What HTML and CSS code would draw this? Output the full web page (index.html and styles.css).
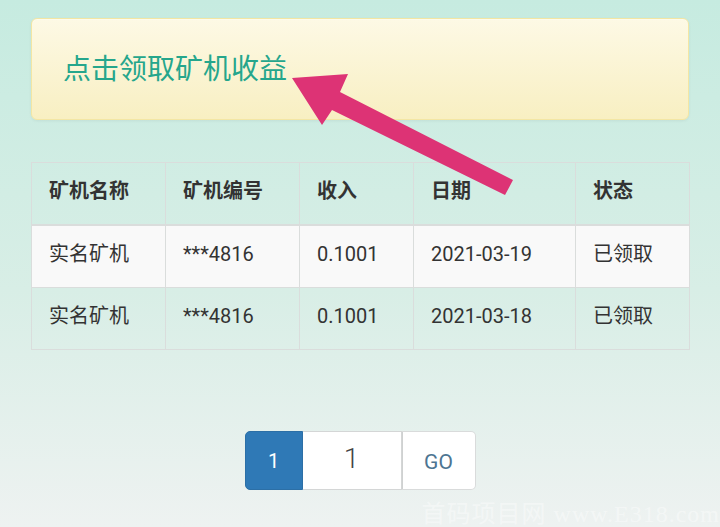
FILE: index.html
```html
<!DOCTYPE html>
<html lang="zh-CN">
<head>
    <meta charset="UTF-8">
    <meta name="viewport" content="width=device-width, initial-scale=1.0">
    <title>矿机收益</title>
    <link rel="stylesheet" href="styles.css">
</head>
<body>
<div class="page">
    <div class="alert">
        <a href="#" class="alert-link">点击领取矿机收益</a>
    </div>

    <table class="record">
        <colgroup>
            <col class="c-name">
            <col class="c-no">
            <col class="c-income">
            <col class="c-date">
            <col class="c-state">
        </colgroup>
        <thead>
        <tr>
            <th>矿机名称</th>
            <th>矿机编号</th>
            <th>收入</th>
            <th>日期</th>
            <th>状态</th>
        </tr>
        </thead>
        <tbody>
        <tr>
            <td>实名矿机</td>
            <td>***4816</td>
            <td>0.1001</td>
            <td>2021-03-19</td>
            <td>已领取</td>
        </tr>
        <tr>
            <td>实名矿机</td>
            <td>***4816</td>
            <td>0.1001</td>
            <td>2021-03-18</td>
            <td>已领取</td>
        </tr>
        </tbody>
    </table>

    <div class="pager">
        <span class="pager-cur">1</span>
        <input type="text" class="pager-input" value="1">
        <button class="pager-go">GO</button>
    </div>
</div>

<!-- 标注箭头 -->
<svg class="arrow" width="720" height="527" viewBox="0 0 720 527">
    <polygon points="292,78 348,74 340,92 513,180 505,195 332,110 322,125" fill="#dd3375"/>
</svg>

<div class="watermark">首码项目网 www.E318.com</div>
</body>
</html>
```

FILE: styles.css
```css
* {
    margin: 0;
    padding: 0;
    box-sizing: border-box;
}

a {
    text-decoration: none;
}

input, button {
    background: transparent;
    border: 0;
    outline: none;
    font: inherit;
}

html, body {
    height: 100%;
}

body {
    position: relative;
    overflow: hidden;
    background: linear-gradient(#c6ebe0, #d8eee6 55%, #eef2f1);
    font-family: Roboto, "Noto Sans CJK SC", sans-serif;
    font-size: 20px;
    color: #333;
}

.page {
    padding: 18px 31px 0;
}

.alert {
    height: 102px;
    display: flex;
    align-items: center;
    padding: 0 31px 4px;
    background: linear-gradient(#fdf9e5, #f8efc2);
    border: 1px solid #f3e6a4;
    border-radius: 6px;
    box-shadow: inset 0 1px 0 rgba(255, 255, 255, .3), 0 1px 3px rgba(0, 0, 0, .06);
}

.alert-link {
    font-family: "Noto Sans CJK SC", sans-serif;
    font-size: 28px;
    color: #25a68c;
}

.record {
    width: 658px;
    margin-top: 42px;
    border-collapse: collapse;
    table-layout: fixed;
}

.c-name, .c-no {
    width: 134px;
}

.c-income {
    width: 114px;
}

.c-date {
    width: 162px;
}

.c-state {
    width: 114px;
}

.record th,
.record td {
    border: 1px solid #dadddc;
    padding: 16px 17px 20px;
    line-height: 25px;
    text-align: left;
    white-space: nowrap;
}

.record th {
    font-weight: bold;
    border-bottom: 2px solid #dadddc;
    height: 61px;
}

.record td {
    height: 62px;
}

.record tbody tr:nth-child(odd) {
    background: #f9f9f9;
}

.pager {
    display: flex;
    justify-content: center;
    margin-top: 81px;
}

.pager-cur,
.pager-input,
.pager-go {
    height: 59px;
    display: flex;
    align-items: center;
    justify-content: center;
}

.pager-cur {
    width: 58px;
    background: #2f79b6;
    border: 1px solid #2c6fa6;
    border-radius: 5px 0 0 5px;
    color: #fff;
}

.pager-input {
    width: 99px;
    background: #fff;
    border: 1px solid #d4d6d6;
    border-left: 0;
    text-align: center;
    font-size: 28px;
    font-weight: 300;
    color: #444;
    padding-bottom: 4px;
}

.pager-go {
    width: 74px;
    background: #fff;
    border: 1px solid #d9dbdb;
    border-left: 1px solid #cfd1d1;
    border-radius: 0 5px 5px 0;
    font-size: 21px;
    color: #4d7592;
    padding-top: 2px;
}

.arrow {
    position: absolute;
    top: 0;
    left: 0;
    pointer-events: none;
}

.watermark {
    position: absolute;
    right: 0;
    top: 494px;
    font-family: "Liberation Serif", "Noto Sans CJK SC", serif;
    font-size: 24px;
    letter-spacing: 1px;
    color: rgba(255, 255, 255, .4);
    white-space: nowrap;
}
```
